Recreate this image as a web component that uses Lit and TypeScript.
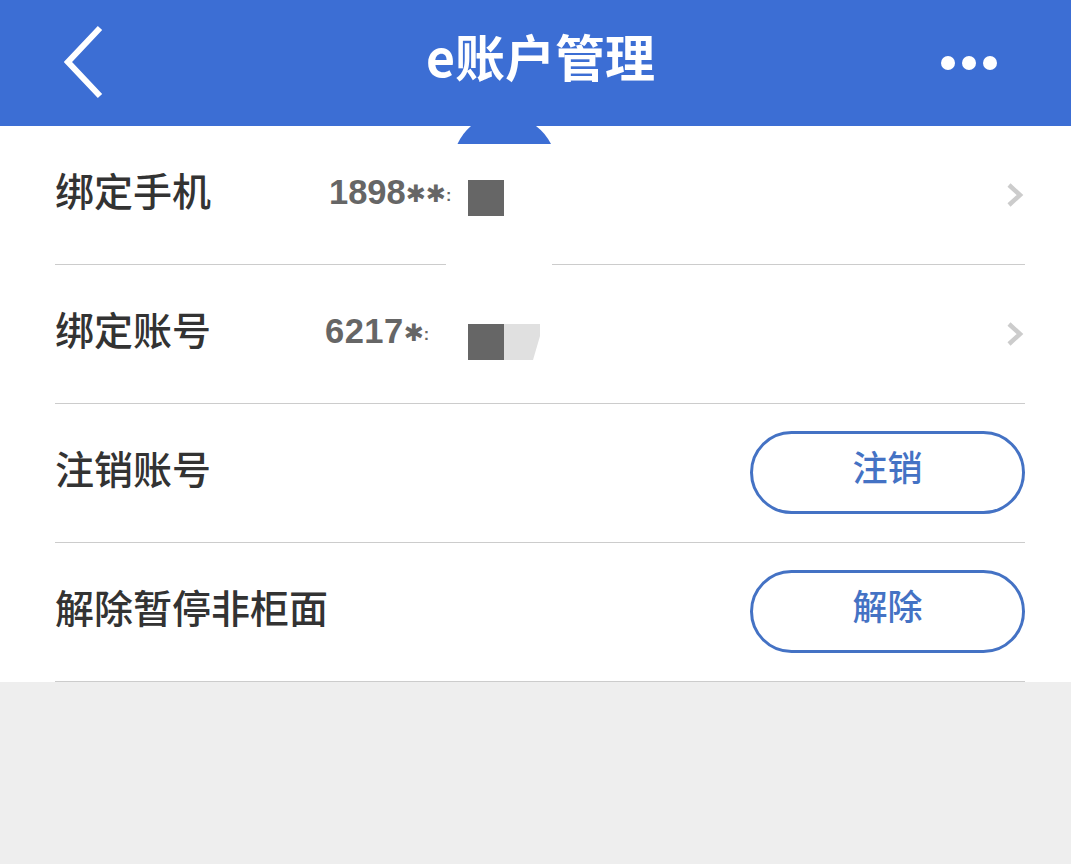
import { LitElement, html, css } from "lit";
import { customElement } from "lit/decorators.js";

const chevron = html`<svg class="chev" width="18" height="26" viewBox="0 0 18 26"><path d="M3 3 L14 13 L3 23" fill="none" stroke="#ccc" stroke-width="4.5"/></svg>`;

@customElement("app-root")
export class AppRoot extends LitElement {
  static styles = css`
    :host { display: flex; flex-direction: column; position: relative; height: 864px; background: #eee; overflow: hidden;
      font-family: "Noto Sans CJK SC", "Liberation Sans", sans-serif; }
    .header { height: 126px; background: #3c6ed4; display: flex; align-items: center; justify-content: space-between; padding: 0 74px 0 64px; position: relative; flex: none; }
    .back { display: block; }
    .title { position: absolute; left: 426px; top: 20px; color: #fff; font-size: 50px; line-height: 70px; font-weight: 700; white-space: nowrap; }
    .dots { display: block; }
    .list { background: #fff; padding: 0 46px 0 55px; flex: none; }
    .row { height: 138px; border-bottom: 1px solid #ccc; display: flex; align-items: center; position: relative; }
    .label { font-size: 39px; line-height: 50px; font-weight: 500; color: #333; white-space: nowrap; margin-top: -12px; }
    .val { position: absolute; z-index: 1; top: 41px; font-family: "Liberation Sans", sans-serif; font-size: 34.5px; line-height: 50px; font-weight: 700; color: #666; white-space: nowrap; }
    .val.a { left: 274px; }
    .val.b { left: 270px; letter-spacing: 0.5px; }
    .star { font-family: "DejaVu Sans", sans-serif; font-size: 24px; font-weight: 400; letter-spacing: 0; vertical-align: 2px; }
    .sliver { font-size: 16px; letter-spacing: 0; vertical-align: 3px; }
    .chev { position: absolute; right: 1px; top: 56px; }
    .btn { margin-left: auto; width: 275px; height: 83px; box-sizing: border-box; border: 3.5px solid #4472c4; border-radius: 42px; background: #fff; color: #4472c4; font: 500 35px/1 "Noto Sans CJK SC", sans-serif; display: flex; align-items: center; justify-content: center; padding: 0 0 14px; margin-top: -2px; }
    .dome { position: absolute; left: 446px; top: 126px; width: 106px; height: 156px; background: #fff; }
    .dome svg { display: block; }
    .sq { position: absolute; width: 36px; height: 36px; background: #666; }
    .sq.one { left: 22px; top: 54px; }
    .sq.two { left: 413px; top: 59px; }
    .lite { position: absolute; left: 449px; top: 59px; display: block; }
  `;

  render() {
    return html`
      <div class="header">
        <svg class="back" width="42" height="76" viewBox="0 0 42 76"><path d="M36 3 L4 37 L36 71" fill="none" stroke="#fff" stroke-width="6"/></svg>
        <div class="title">e账户管理</div>
        <svg class="dots" width="56" height="16" viewBox="0 0 56 16"><circle cx="7" cy="8" r="7" fill="#fff"/><circle cx="28" cy="8" r="7" fill="#fff"/><circle cx="49" cy="8" r="7" fill="#fff"/></svg>
      </div>
      <div class="list">
        <div class="row">
          <span class="label">绑定手机</span>
          <span class="val a">1898<span class="star">✱✱</span><span class="sliver">:</span></span>
          ${chevron}
        </div>
        <div class="row">
          <span class="label">绑定账号</span>
          <span class="val b">6217<span class="star">✱</span><span class="sliver">:</span></span>
          ${chevron}
          <span class="sq two"></span>
          <svg class="lite" width="36" height="36" viewBox="0 0 36 36"><path d="M0 0H36V12L29 36H0Z" fill="#e0e0e0"/></svg>
        </div>
        <div class="row">
          <span class="label">注销账号</span>
          <button class="btn">注销</button>
        </div>
        <div class="row">
          <span class="label">解除暂停非柜面</span>
          <button class="btn">解除</button>
        </div>
      </div>
      <div class="dome">
        <svg width="106" height="18" viewBox="0 0 106 18"><path d="M11.5 18 A 52 52 0 0 1 25 0 H 90 A 52 52 0 0 1 105 18 Z" fill="#3c6ed4"/></svg>
        <span class="sq one"></span>
      </div>
    `;
  }
}
